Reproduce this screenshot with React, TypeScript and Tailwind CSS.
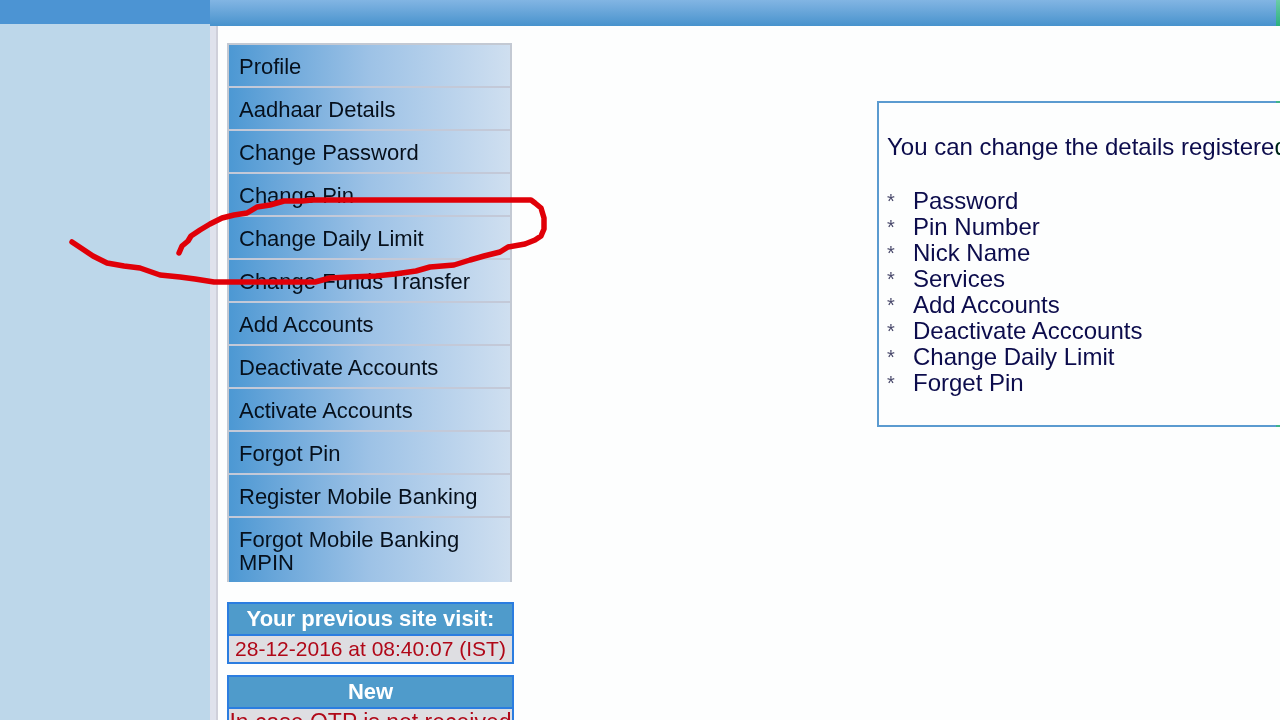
import React from 'react';

const menuItems = [
  'Profile',
  'Aadhaar Details',
  'Change Password',
  'Change Pin',
  'Change Daily Limit',
  'Change Funds Transfer',
  'Add Accounts',
  'Deactivate Accounts',
  'Activate Accounts',
  'Forgot Pin',
  'Register Mobile Banking',
  'Forgot Mobile Banking MPIN',
];

const changeableDetails = [
  'Password',
  'Pin Number',
  'Nick Name',
  'Services',
  'Add Accounts',
  'Deactivate Acccounts',
  'Change Daily Limit',
  'Forget Pin',
];

interface NoticeBoxProps {
  title: string;
  children: React.ReactNode;
}

function NoticeBox({ title, children }: NoticeBoxProps) {
  return (
    <section className="border-2 border-[#2b7de0] text-center">
      <h2 className="bg-[#4f9bcb] text-[22px] leading-[30px] font-bold text-white">{title}</h2>
      <div className="border-t-2 border-[#2b7de0] bg-[#dedee2] leading-[26px] whitespace-nowrap text-[#b00818]">
        {children}
      </div>
    </section>
  );
}

function SideMenu() {
  return (
    <nav className="mr-0.5 border-2 border-b-0 border-[#c3c9d3]">
      <ul>
        {menuItems.map((item) => (
          <li
            key={item}
            className="border-b-2 border-[#c3c9d8] bg-linear-to-r from-[#4c98d3] via-[#9dc2e6] via-50% to-[#cfdff0] last:border-b-0"
          >
            <a href="#" className="block px-2.5 pt-2.5 pb-2 text-[22px] leading-[23px] text-[#06101c]">
              {item}
            </a>
          </li>
        ))}
      </ul>
    </nav>
  );
}

function DetailsPanel() {
  return (
    <section className="mt-[58px] h-[326px] w-[800px] shrink-0 border-2 border-[#5b9bd0] px-2 pt-[31px] text-[24px] leading-[26px] text-[#0c0c4c]">
      <p className="mb-7 whitespace-nowrap">You can change the details registered</p>
      <ul>
        {changeableDetails.map((detail) => (
          <li key={detail} className="flex">
            <span className="w-[26px] text-[20px] text-[#4a4a6c]">*</span>
            {detail}
          </li>
        ))}
      </ul>
    </section>
  );
}

function PenMark() {
  return (
    <svg
      className="pointer-events-none absolute top-0 left-0"
      width="600"
      height="320"
      viewBox="0 0 600 320"
      fill="none"
      stroke="#e00008"
      strokeWidth="5.5"
      strokeLinecap="round"
      strokeLinejoin="round"
    >
      <path d="M179 253L182 246L188 241L191 236L200 230L210 224L222 218L234 215L247 213L257 207L270 205L284 201L302 201L312 200H531L535 203L541 208L544 218V229L541 236L535 240L525 244L508 247L500 252L484 256L470 260L454 265L430 267L416 271L395 274L376 276L350 277L330 278L315 282H214L195 279L180 277L160 275L140 268L124 266L107 263L93 256L84 250L72 242" />
    </svg>
  );
}

export default function App() {
  return (
    <div className="relative isolate flex h-screen flex-col overflow-hidden bg-[#fdfefe] font-['Liberation_Sans',Arial,sans-serif]">
      <div className="flex min-h-0 flex-1">
        <aside className="w-[210px] shrink-0 border-t-[24px] border-[#4c94d3] bg-[#bdd7ea]" />
        <div className="flex min-w-0 flex-1 flex-col">
          <header className="h-[26px] shrink-0 bg-linear-to-b from-[#82b5e3] to-[#4793cd]" />
          <div className="flex min-h-0 flex-1">
            <div className="w-2 shrink-0 border-r-2 border-[#cfd0da] bg-[#dfe2ec]" />
            <main className="flex min-w-0 flex-1 items-start overflow-hidden pt-[17px] pl-[9px]">
              <div className="mr-[363px] flex w-[287px] shrink-0 flex-col">
                <SideMenu />
                <div className="mt-5 flex flex-col gap-[11px]">
                  <NoticeBox title="Your previous site visit:">
                    <p className="text-[21px]">28-12-2016 at 08:40:07 (IST)</p>
                  </NoticeBox>
                  <NoticeBox title="New">
                    <p className="text-[23px]">In case OTP is not received</p>
                  </NoticeBox>
                </div>
              </div>
              <DetailsPanel />
            </main>
          </div>
        </div>
      </div>
      <PenMark />
      {/* green fringe at the right edge */}
      <div className="pointer-events-none absolute inset-y-0 right-0 w-1 bg-[#22c78a] mix-blend-hue" />
    </div>
  );
}
